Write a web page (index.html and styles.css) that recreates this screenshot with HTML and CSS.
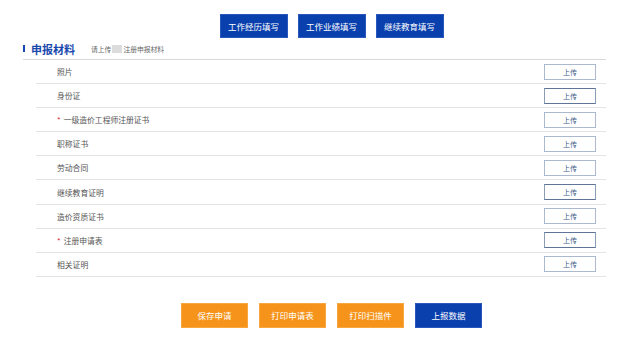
FILE: index.html
```html
<!DOCTYPE html>
<html lang="zh">
<head>
<meta charset="utf-8">
<link rel="stylesheet" href="styles.css">
</head>
<body>
<div class="page">
  <div class="tabs">
    <button class="btn btn-blue">工作经历填写</button>
    <button class="btn btn-blue">工作业绩填写</button>
    <button class="btn btn-blue">继续教育填写</button>
  </div>
  <div class="section-head">
    <span class="bar"></span>
    <span class="title">申报材料</span>
    <span class="hint">请上传<span class="blur"></span>注册申报材料</span>
  </div>
  <div class="rows">
    <div class="row"><span class="label">照片</span><button class="upload">上传</button></div>
    <div class="row"><span class="label">身份证</span><button class="upload dark">上传</button></div>
    <div class="row"><span class="label"><i class="req">*</i>一级造价工程师注册证书</span><button class="upload">上传</button></div>
    <div class="row"><span class="label">职称证书</span><button class="upload">上传</button></div>
    <div class="row"><span class="label">劳动合同</span><button class="upload">上传</button></div>
    <div class="row"><span class="label">继续教育证明</span><button class="upload dark">上传</button></div>
    <div class="row"><span class="label">造价资质证书</span><button class="upload">上传</button></div>
    <div class="row"><span class="label"><i class="req">*</i>注册申请表</span><button class="upload dark">上传</button></div>
    <div class="row"><span class="label">相关证明</span><button class="upload">上传</button></div>
  </div>
  <div class="actions">
    <button class="btn btn-orange">保存申请</button>
    <button class="btn btn-orange">打印申请表</button>
    <button class="btn btn-orange">打印扫描件</button>
    <button class="btn btn-blue">上报数据</button>
  </div>
</div>
</body>
</html>
```
FILE: styles.css
```css
* { box-sizing: border-box; }
html, body { margin: 0; padding: 0; background: #fff; }
body {
  font-family: "Noto Sans CJK SC", "Noto Sans", sans-serif;
  color: #555;
  width: 617px;
  height: 343px;
  overflow: hidden;
}
.page {
  padding: 14px 11px 0 23px;
}
.tabs, .actions {
  display: flex;
  justify-content: center;
  padding-left: 34px;
}
.tabs { gap: 10px; }
.actions { gap: 11px; margin-top: 26px; }
.btn {
  font-family: inherit;
  border: none;
  margin: 0;
  padding: 0;
  width: 68px;
  height: 24px;
  font-size: 8.5px;
  color: #fff;
  cursor: pointer;
}
.actions .btn { height: 25px; width: 67px; }
.btn-blue { background: #0a3fae; border: 1px solid #2a57bd; }
.btn-orange { background: #f5931a; border: 1px solid #f8a640; }
.section-head {
  display: flex;
  align-items: center;
  height: 22px;
  border-bottom: 1px solid #d9d9d9;
}
.bar {
  width: 2px;
  height: 7px;
  background: #1747b0;
  margin-right: 6px;
}
.title {
  font-size: 11px;
  font-weight: bold;
  color: #1a49ae;
  margin-right: 16px;
}
.hint {
  font-size: 6.8px;
  color: #666;
  display: flex;
  align-items: center;
}
.blur {
  display: inline-block;
  width: 10px;
  height: 8px;
  background: #dcdcdc;
  margin: 0 1px;
}
.rows { margin-left: 13px; }
.row {
  display: flex;
  align-items: center;
  justify-content: space-between;
  height: 24.1px;
  border-bottom: 1px solid #e3e3e3;
}
.label {
  font-size: 7.8px;
  color: #555;
  padding-left: 21px;
}
.req {
  font-style: normal;
  color: #d62b3a;
  margin-right: 3px;
}
.upload {
  font-family: inherit;
  width: 52px;
  height: 16px;
  margin: 0 10px 0 0;
  padding: 0;
  border: 1px solid #aab9cd;
  background: #fff;
  color: #3a5887;
  font-size: 7px;
}
.upload.dark { border-color: #8a9cb8; border-top-color: #5f7598; border-bottom-color: #5f7598; }
```
